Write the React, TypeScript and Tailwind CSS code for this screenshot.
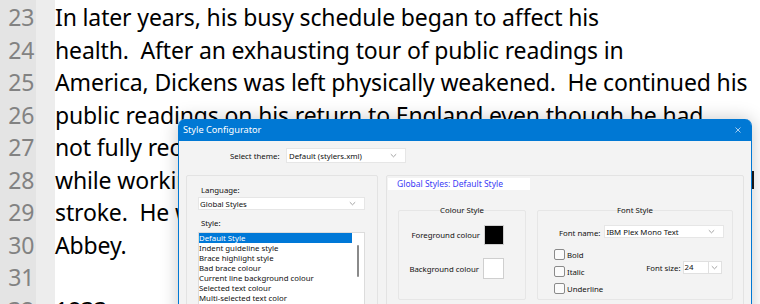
import React from "react";

const lines: [string, string][] = [
  ["23", "In later years, his busy schedule began to affect his"],
  ["24", "health.  After an exhausting tour of public readings in"],
  ["25", "America, Dickens was left physically weakened.  He continued his"],
  ["26", "public readings on his return to England even though he had"],
  ["27", "not fully recovered, and he suffered a stroke in 1869"],
  ["28", "while working on his last novel.  He died of another"],
  ["29", "stroke.  He was buried in Poets' Corner, Westminster"],
  ["30", "Abbey."],
  ["31", ""],
  ["32", "1833"],
];

const styles = [
  "Default Style",
  "Indent guideline style",
  "Brace highlight style",
  "Bad brace colour",
  "Current line background colour",
  "Selected text colour",
  "Multi-selected text color",
  "Caret colour",
];

function Chevron() {
  return (
    <svg width="7" height="5" viewBox="0 0 7 5" className="shrink-0">
      <path d="M0.8 1.2 L3.5 3.8 L6.2 1.2" fill="none" stroke="#8c8c8c" strokeWidth="0.8" />
    </svg>
  );
}

function Check({ label }: { label: string }) {
  return (
    <div className="flex items-center gap-[2px] h-[17px]">
      <div className="w-[11px] h-[11px] rounded-[2px] border border-[#8a8a8a] bg-[#fbfbfb]" />
      <span>{label}</span>
    </div>
  );
}

export default function App() {
  return (
    <div className="relative w-[760px] h-[304px] overflow-hidden bg-white">
      {/* editor */}
      <div className="flex h-full" style={{ fontFamily: "'Noto Sans', sans-serif" }}>
        <div className="w-[36px] bg-[#e4e4e4] shrink-0 flex flex-col pt-[1px]">
          {lines.map(([n]) => (
            <div
              key={n}
              className="shrink-0 h-[32.5px] leading-[32.5px] text-right pr-[2px] text-[23px] tracking-[-0.3px] text-[#828282]"
            >
              {n}
            </div>
          ))}
        </div>
        <div className="w-[19px] bg-[#ededed] shrink-0" />
        <div className="flex flex-col pt-[1px]">
          {lines.map(([n, t]) => (
            <div
              key={n}
              className="shrink-0 h-[32.5px] leading-[32.5px] text-[23px] tracking-[-0.14px] text-black whitespace-pre"
            >
              {t}
            </div>
          ))}
        </div>
      </div>

      {/* editor caret/scroll mark */}
      <div className="absolute left-[751px] top-[171px] w-[3px] h-[18px] bg-[#1a1a1a]" />

      {/* dialog */}
      <div
        className="absolute left-[178px] top-[119px] w-[574px] h-[200px] rounded-t-[7px] bg-[#f3f3f3] border-x border-[#0078d4] shadow-[0_0_18px_rgba(0,0,0,0.22)] text-[7.8px] leading-[10px] text-[#111111] flex flex-col"
        style={{ fontFamily: "'Noto Sans', sans-serif" }}
      >
        <div className="h-[22px] bg-[#0078d4] rounded-t-[6px] flex items-center justify-between pl-[4px] pr-[10px] text-white text-[9.2px] shrink-0">
          <span>Style Configurator</span>
          <svg width="6" height="6" viewBox="0 0 6 6">
            <path d="M0.5 0.5 L5.5 5.5 M5.5 0.5 L0.5 5.5" stroke="#cfe2f5" strokeWidth="0.8" />
          </svg>
        </div>
        <div className="flex flex-col pl-[7px] pt-[7px]">
          <div className="flex items-center h-[15px] pl-[44px] gap-[6px]">
            <span className="w-[50px] whitespace-nowrap">Select theme:</span>
            <div className="w-[120px] h-[15px] bg-white border border-[#e6e6e6] flex items-center justify-between pl-[2px] pr-[8px]">
              <span>Default (stylers.xml)</span>
              <Chevron />
            </div>
          </div>
          <div className="flex gap-[8px] mt-[12px]">
            {/* left group */}
            <div className="w-[192px] h-[150px] border border-[#e3e3e3] rounded-[2px] flex flex-col pl-[11px] pr-[12px] pt-[9px] shrink-0">
              <span className="pl-[3px] h-[12px]">Language:</span>
              <div className="h-[13px] bg-white border border-[#e6e6e6] flex items-center justify-between pl-[1px] pr-[8px]">
                <span>Global Styles</span>
                <Chevron />
              </div>
              <span className="pl-[3px] mt-[8px] h-[14px] leading-[10px]">Style:</span>
              <div className="h-[80px] bg-white border border-[#dcdcdc] flex">
                <div className="flex-1 flex flex-col">
                  {styles.map((s, i) => (
                    <div
                      key={s}
                      className={
                        i === 0
                          ? "shrink-0 h-[10px] leading-[10px] bg-[#0078d7] text-white whitespace-nowrap"
                          : "shrink-0 h-[10px] leading-[10px] whitespace-nowrap"
                      }
                    >
                      {s}
                    </div>
                  ))}
                </div>
                <div className="w-[12px] flex justify-center pt-[12px]">
                  <div className="w-[2px] h-[32px] bg-[#8a8a8a] rounded-full" />
                </div>
              </div>
            </div>
            {/* right panel */}
            <div className="w-[358px] h-[150px] border border-[#e3e3e3] rounded-[2px] flex flex-col shrink-0">
              <div className="mt-[2px] ml-[1px] w-[142px] h-[12px] bg-white text-[#3b3bf5] text-[8.5px] leading-[12px] pl-[9px] whitespace-nowrap">
                Global Styles: Default Style
              </div>
              <div className="flex gap-[11px] pl-[11px] mt-[20px]">
                <div className="relative w-[128px] h-[90px] border border-[#e6e6e6] rounded-[2px] flex flex-col shrink-0">
                  <span className="absolute -top-[6px] left-0 right-0 text-center leading-[10px]">
                    Colour Style
                  </span>
                  <div className="flex items-center justify-end pr-[21px] gap-[4px] mt-[14px]">
                    <span className="whitespace-nowrap">Foreground colour</span>
                    <div className="w-[20px] h-[20px] bg-black border border-[#cfcfcf]" />
                  </div>
                  <div className="flex items-center justify-end pr-[21px] gap-[4px] mt-[13px]">
                    <span className="whitespace-nowrap">Background colour</span>
                    <div className="w-[21px] h-[21px] bg-white border border-[#cfcfcf]" />
                  </div>
                </div>
                <div className="relative w-[196px] h-[90px] border border-[#e6e6e6] rounded-[2px] flex flex-col shrink-0">
                  <span className="absolute -top-[6px] left-0 right-0 text-center leading-[10px]">
                    Font Style
                  </span>
                  <div className="flex items-center gap-[4px] mt-[14px] pl-[21px]">
                    <span className="whitespace-nowrap pt-[3px]">Font name:</span>
                    <div className="w-[120px] h-[13px] bg-white border border-[#e6e6e6] flex items-center justify-between pl-[1px] pr-[8px]">
                      <span className="whitespace-nowrap">IBM Plex Mono Text</span>
                      <Chevron />
                    </div>
                  </div>
                  <div className="flex pl-[16px] mt-[8px]">
                    <div className="flex flex-col">
                      <Check label="Bold" />
                      <Check label="Italic" />
                      <Check label="Underline" />
                    </div>
                    <div className="flex items-start gap-[2px] ml-[43px] mt-[15px]">
                      <span className="whitespace-nowrap pt-[2px]">Font size:</span>
                      <div className="flex h-[13px]">
                        <div className="w-[26px] bg-white border border-[#e0e0e0] leading-[11px] pl-[1px]">24</div>
                        <div className="w-[13px] bg-white border border-l-0 border-[#e0e0e0] flex items-center justify-center">
                          <Chevron />
                        </div>
                      </div>
                    </div>
                  </div>
                </div>
              </div>
            </div>
          </div>
        </div>
      </div>
    </div>
  );
}
